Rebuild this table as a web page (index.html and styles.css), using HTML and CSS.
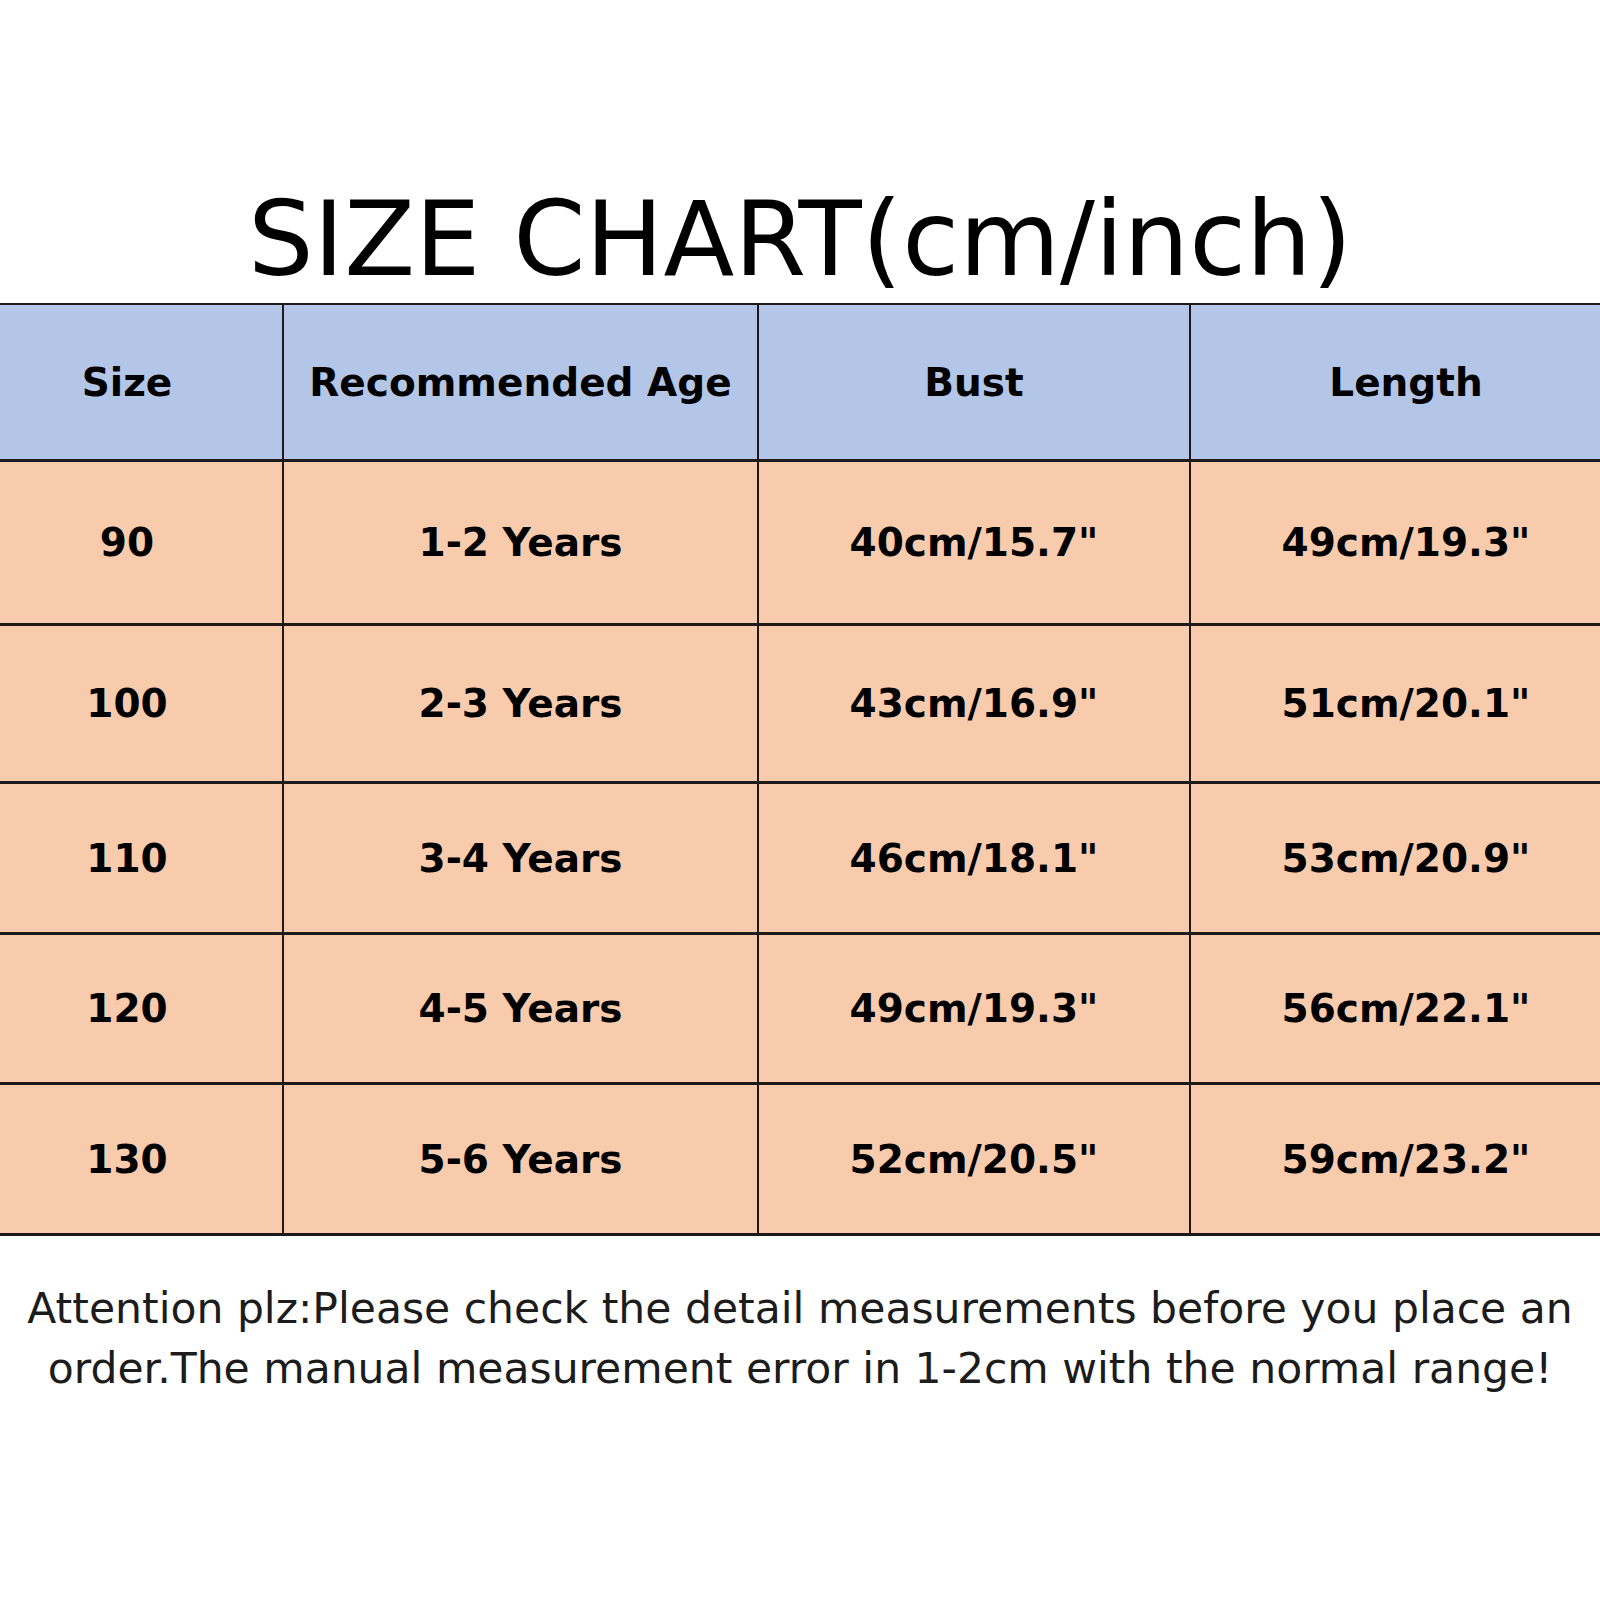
FILE: index.html
```html
<!DOCTYPE html>
<html lang="en">
<head>
<meta charset="utf-8">
<title>Size Chart</title>
<link rel="stylesheet" href="styles.css">
</head>
<body>
<div class="page">
  <h1 class="title">SIZE CHART(cm/inch)</h1>
  <div class="chart">
    <div class="cell head">Size</div>
    <div class="cell head">Recommended Age</div>
    <div class="cell head">Bust</div>
    <div class="cell head">Length</div>

    <div class="cell">90</div>
    <div class="cell">1-2 Years</div>
    <div class="cell">40cm/15.7"</div>
    <div class="cell">49cm/19.3"</div>

    <div class="cell">100</div>
    <div class="cell">2-3 Years</div>
    <div class="cell">43cm/16.9"</div>
    <div class="cell">51cm/20.1"</div>

    <div class="cell">110</div>
    <div class="cell">3-4 Years</div>
    <div class="cell">46cm/18.1"</div>
    <div class="cell">53cm/20.9"</div>

    <div class="cell">120</div>
    <div class="cell">4-5 Years</div>
    <div class="cell">49cm/19.3"</div>
    <div class="cell">56cm/22.1"</div>

    <div class="cell">130</div>
    <div class="cell">5-6 Years</div>
    <div class="cell">52cm/20.5"</div>
    <div class="cell">59cm/23.2"</div>
  </div>
  <p class="note">Attention plz:Please check the detail measurements before you place an<br>order.The manual measurement error in 1-2cm with the normal range!</p>
</div>
</body>
</html>
```
FILE: styles.css
```css
html, body {
  margin: 0;
  padding: 0;
  background: #ffffff;
  overflow: hidden;
}

.page {
  width: 1600px;
  height: 1600px;
  overflow: hidden;
}

.title {
  margin: 0;
  padding-top: 179px;
  margin-bottom: 4px;
  height: 120px;
  line-height: 120px;
  font-family: "DejaVu Sans", sans-serif;
  font-weight: normal;
  font-size: 103.5px;
  color: #000;
  text-align: center;
}

.chart {
  display: grid;
  grid-template-columns: 310px 473px 430px 430px;
  grid-template-rows: 154px 161px 155px 148px 147px 148px;
  column-gap: 2px;
  row-gap: 3px;
  padding: 2px 0 3px 0;
  margin-left: -28px;
  width: 1649px;
  background: #1e1a1a;
}

.cell {
  display: flex;
  align-items: center;
  justify-content: center;
  background: #f8cbad;
  font-family: "DejaVu Sans", sans-serif;
  font-weight: bold;
  font-size: 39px;
  color: #000;
}

.cell.head {
  background: #b4c6e7;
}

.note {
  margin: 43px 0 0 0;
  font-family: "DejaVu Sans", sans-serif;
  font-size: 42.5px;
  line-height: 60px;
  color: #1c1c1c;
  text-align: center;
}
```
